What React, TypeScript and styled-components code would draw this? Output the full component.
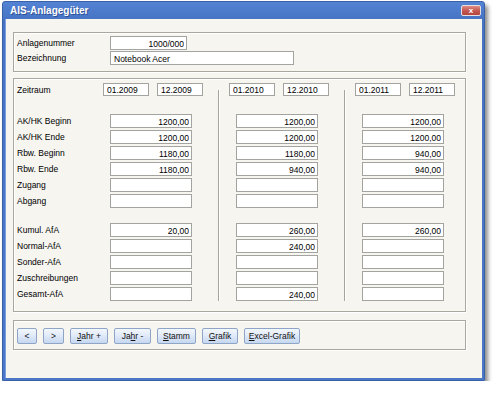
import React from 'react';
import styled, { createGlobalStyle } from 'styled-components';

const GlobalStyle = createGlobalStyle`
  html, body {
    margin: 0;
    background: #fff;
  }
  body {
    font-family: "Liberation Sans", Arial, sans-serif;
    font-size: 8.5px;
    color: #000;
  }
`;

const Window = styled.div`
  margin: 1px 0 0 2px;
  width: 483px;
  height: 380px;
  box-sizing: border-box;
  display: flex;
  flex-direction: column;
  background: linear-gradient(#5483d3, #4673c4 18px, #4a77c7);
  border: 1px solid #3a60a8;
  border-radius: 3px 3px 0 0;
  box-shadow: 3px 4px 4px rgba(0, 0, 0, 0.45);
`;

const TitleBar = styled.div`
  height: 17px;
  display: flex;
  align-items: center;
  justify-content: space-between;
  padding: 0 3px 0 7px;
`;

const Title = styled.span`
  color: #fff;
  font-weight: bold;
  font-size: 10px;
  text-shadow: 1px 1px 0 rgba(20, 40, 100, 0.5);
`;

const CloseButton = styled.div`
  width: 20px;
  height: 11px;
  box-sizing: border-box;
  display: flex;
  align-items: center;
  justify-content: center;
  border: 1px solid #e6e0e0;
  border-radius: 2px;
  background: linear-gradient(#e08a84, #c25650 55%, #b4443f);
  color: #fff;
  font-weight: bold;
  font-size: 8px;
  line-height: 1;
`;

const Content = styled.div`
  flex: 1;
  margin: 0 2px 2px;
  background: #f6f5f0;
  box-shadow: inset 1px 0 0 #7c9fdc;
  display: flex;
  flex-direction: column;
  padding: 13px 0 0 8px;
`;

const Group = styled.div<{ $h: number; $gap?: number }>`
  width: 453px;
  height: ${(p) => p.$h}px;
  box-sizing: border-box;
  border: 1px solid #aaa89e;
  box-shadow: inset 1px 1px 0 #fff, 1px 1px 0 #fff;
  margin-bottom: ${(p) => p.$gap ?? 0}px;
`;

const HeadGrid = styled.div`
  display: grid;
  grid-template-columns: 93px auto;
  row-gap: 1px;
  padding: 3px 0 0 3px;
  align-items: center;
`;

const Label = styled.div`
  height: 14px;
  line-height: 15px;
  white-space: nowrap;
`;

const Field = styled.input<{ $w: number; $right?: boolean; $h?: number }>`
  width: ${(p) => p.$w}px;
  height: ${(p) => p.$h ?? 14}px;
  box-sizing: border-box;
  margin: 0;
  padding: 1px ${(p) => (p.$right ? 2 : 3)}px 0;
  border: 1px solid #a3a3a0;
  background: #fff;
  font-family: inherit;
  font-size: 8.5px;
  color: #000;
  text-align: ${(p) => (p.$right ? 'right' : 'left')};
  outline: none;
`;

const Columns = styled.div`
  display: flex;
  padding: 4px 0 0 3px;
`;

const LabelColumn = styled.div`
  width: 86px;
  display: flex;
  flex-direction: column;
`;

const YearColumn = styled.div`
  width: 100px;
  display: flex;
  flex-direction: column;
`;

const PeriodRow = styled.div`
  height: 13px;
  line-height: 14px;
  display: flex;
  gap: 8px;
`;

const Section = styled.div<{ $top: number; $indent?: number }>`
  margin-top: ${(p) => p.$top}px;
  padding-left: ${(p) => p.$indent ?? 0}px;
  display: flex;
  flex-direction: column;
  gap: 2px;
`;

const Divider = styled.div`
  width: 1px;
  margin: 7px 10px 0 15px;
  background: #a5a39a;
  box-shadow: 1px 0 0 #fff;
`;

const ButtonBar = styled.div`
  display: flex;
  gap: 6px;
  padding: 7px 0 0 3px;
`;

const Button = styled.button<{ $w: number }>`
  width: ${(p) => p.$w}px;
  height: 16px;
  box-sizing: border-box;
  padding: 0;
  border: 1px solid #8ea5c8;
  border-radius: 2px;
  background: linear-gradient(#f3f7fd, #dfe9f8 50%, #c5d7f0);
  font-family: inherit;
  font-size: 8.5px;
  color: #111;
`;

type Year = { from: string; to: string; top: string[]; bottom: string[] };

const years: Year[] = [
  {
    from: '01.2009',
    to: '12.2009',
    top: ['1200,00', '1200,00', '1180,00', '1180,00', '', ''],
    bottom: ['20,00', '', '', '', ''],
  },
  {
    from: '01.2010',
    to: '12.2010',
    top: ['1200,00', '1200,00', '1180,00', '940,00', '', ''],
    bottom: ['260,00', '240,00', '', '', '240,00'],
  },
  {
    from: '01.2011',
    to: '12.2011',
    top: ['1200,00', '1200,00', '940,00', '940,00', '', ''],
    bottom: ['260,00', '', '', '', ''],
  },
];

const topLabels = ['AK/HK Beginn', 'AK/HK Ende', 'Rbw. Beginn', 'Rbw. Ende', 'Zugang', 'Abgang'];
const bottomLabels = ['Kumul. AfA', 'Normal-AfA', 'Sonder-AfA', 'Zuschreibungen', 'Gesamt-AfA'];

const YearBlock = ({ from, to, top, bottom }: Year) => (
  <YearColumn>
    <PeriodRow>
      <Field $w={46} $h={13} readOnly value={from} />
      <Field $w={46} $h={13} readOnly value={to} />
    </PeriodRow>
    <Section $top={18} $indent={7}>
      {top.map((v, i) => (
        <Field key={i} $w={82} $right readOnly value={v} />
      ))}
    </Section>
    <Section $top={15} $indent={7}>
      {bottom.map((v, i) => (
        <Field key={i} $w={82} $right readOnly value={v} />
      ))}
    </Section>
  </YearColumn>
);

const App = () => {
  return (
    <>
      <GlobalStyle />
      <Window>
        <TitleBar>
          <Title>AIS-Anlagegüter</Title>
          <CloseButton>x</CloseButton>
        </TitleBar>
        <Content>
          <Group $h={40} $gap={6}>
            <HeadGrid>
              <Label>Anlagenummer</Label>
              <Field $w={77} $right readOnly value="1000/000" />
              <Label>Bezeichnung</Label>
              <Field $w={184} readOnly value="Notebook Acer" />
            </HeadGrid>
          </Group>

          <Group $h={234} $gap={8}>
            <Columns>
              <LabelColumn>
                <PeriodRow>Zeitraum</PeriodRow>
                <Section $top={18}>
                  {topLabels.map((l) => (
                    <Label key={l}>{l}</Label>
                  ))}
                </Section>
                <Section $top={15}>
                  {bottomLabels.map((l) => (
                    <Label key={l}>{l}</Label>
                  ))}
                </Section>
              </LabelColumn>
              {years.map((y, i) => (
                <React.Fragment key={y.from}>
                  {i > 0 && <Divider />}
                  <YearBlock {...y} />
                </React.Fragment>
              ))}
            </Columns>
          </Group>

          <Group $h={30}>
            <ButtonBar>
              <Button $w={20}>&lt;</Button>
              <Button $w={21}>&gt;</Button>
              <Button $w={38}>
                <u>J</u>ahr +
              </Button>
              <Button $w={37}>
                Ja<u>h</u>r -
              </Button>
              <Button $w={39}>
                <u>S</u>tamm
              </Button>
              <Button $w={36}>
                <u>G</u>rafik
              </Button>
              <Button $w={56}>
                <u>E</u>xcel-Grafik
              </Button>
            </ButtonBar>
          </Group>
        </Content>
      </Window>
    </>
  );
};

export default App;
